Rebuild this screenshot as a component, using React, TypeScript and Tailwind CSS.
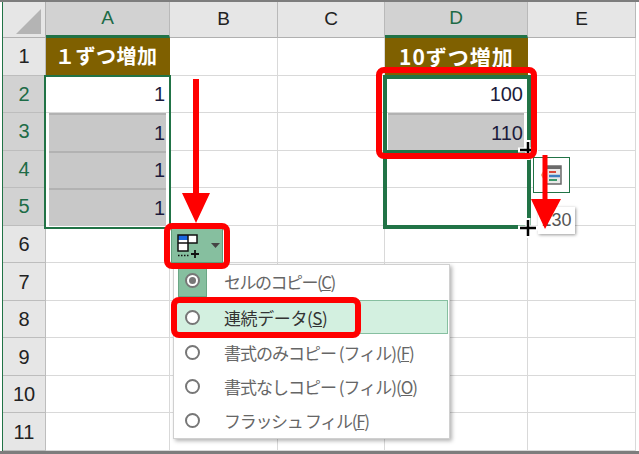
const COLS = ["A", "B", "C", "D", "E"];
const ROWS = [1, 2, 3, 4, 5, 6, 7, 8, 9, 10, 11];
const FONT = "font-['Liberation_Sans','Noto_Sans_CJK_JP',sans-serif]";
const JP = "font-['Noto_Sans_CJK_JP',sans-serif]";

const MENU = [
  { label: "セルのコピー(", key: "C", checked: true, hot: false, track: "tracking-[-1.5px]" },
  { label: "連続データ(", key: "S", checked: false, hot: true, track: "tracking-[-0.4px]" },
  { label: "書式のみコピー (フィル)(", key: "F", checked: false, hot: false, track: "tracking-[-1px]" },
  { label: "書式なしコピー (フィル)(", key: "O", checked: false, hot: false, track: "tracking-[-1px]" },
  { label: "フラッシュ フィル(", key: "F", checked: false, hot: false, track: "tracking-[-1.3px]" },
];

const cellText: Record<string, string> = {
  A2: "1",
  A3: "1",
  A4: "1",
  A5: "1",
  D2: "100",
  D3: "110",
};

const GREY = ["A3", "A4", "A5", "D3"];

function Cell({ id }: { id: string }) {
  const grey = GREY.includes(id);
  if (id === "A1") {
    return (
      <div className="flex items-center border-r border-b border-[#7f6000] bg-[#7f6000]">
        <span className={`${JP} pl-[9px] text-[20px] font-bold tracking-[0.5px] text-white`}>１ずつ増加</span>
      </div>
    );
  }
  if (id === "D1") {
    return (
      <div className="flex items-center border-r border-b border-[#7f6000] bg-[#7f6000]">
        <span className={`${JP} pl-[14px] text-[21px] font-bold tracking-[1px] text-white`}>10ずつ増加</span>
      </div>
    );
  }
  return (
    <div className={`border-r border-[#d9d9d9] bg-white ${grey ? "border-b-0" : "border-b"}`}>
      <div
        className={`flex h-full items-center justify-end text-[20px] text-[#1c1c3c] ${
          grey ? "mx-[3px] border-t-[2px] border-[#b2b2b2] bg-[#c8c8c8] pr-[1px]" : "pr-[4px]"
        }`}
      >
        {cellText[id]}
      </div>
    </div>
  );
}

function Plus({ x, y }: { x: number; y: number }) {
  return (
    <svg className="absolute" style={{ left: x - 10, top: y - 10 }} width="20" height="20" viewBox="0 0 20 20">
      <path d="M0 10h20M10 0v20" stroke="#fff" strokeWidth="5" />
      <path d="M2 10h16M10 2v16" stroke="#000" strokeWidth="2.5" />
    </svg>
  );
}

export default function App() {
  return (
    <div className={`${FONT} relative h-[454px] w-[639px] overflow-hidden border-t-[2px] border-b-[3px] border-[#7d7d7d] bg-white`}>
      <div className="ml-[2px] grid h-full w-[635px] grid-cols-[43px_124px_108px_107px_143px_108px] grid-rows-[36px_repeat(11,37.55px)] border-l border-l-[#217346]">
        {/* corner */}
        <div className="relative border-r border-b border-[#b0b0b0] bg-[#e6e6e6]">
          <svg className="absolute top-[6px] left-[13px]" width="26" height="26" viewBox="0 0 26 26">
            <path d="M0 26 25 1v25z" fill="#b4b4b4" />
          </svg>
        </div>
        {COLS.map((c) => (
          <div
            key={c}
            className={`flex items-center justify-center border-r border-[#b9b9b9] text-[19px] ${
              c === "A" || c === "D"
                ? "border-b-[3px] border-b-[#217346] bg-[#d2d2d2] text-[#1d6b46]"
                : "border-b border-b-[#b0b0b0] bg-[#e6e6e6] text-[#222]"
            }`}
          >
            {c}
          </div>
        ))}
        {ROWS.map((r) => (
          <div key={r} className="contents">
            <div
              className={`flex items-center justify-center border-r border-b border-[#bdbdbd] text-[20px] ${
                r >= 2 && r <= 5 ? "bg-[#d2d2d2] text-[#1d6b46]" : "bg-[#e6e6e6] text-[#222]"
              }`}
            >
              {r}
            </div>
            {COLS.map((c) => (
              <Cell key={c} id={`${c}${r}`} />
            ))}
          </div>
        ))}
      </div>

      {/* selection A2:A5 */}
      <div className="absolute top-[73px] left-[44px] h-[154px] w-[127px] border-[2px] border-[#217346]" />

      {/* selection D2:D5 */}
      <div className="absolute top-[73px] left-[383px] h-[154px] w-[148px] border-[4px] border-[#217346]">
        <div className="absolute top-[71px] right-0 left-0 h-[3px] bg-[#217346]" />
      </div>

      {/* autofill options tag */}
      <div className="absolute top-[155px] left-[533px] flex h-[36px] w-[37px] items-center justify-center border border-[#217346] bg-white">
        <svg width="24" height="24" viewBox="0 0 24 24">
          <path d="M6 3h15v18H6z" fill="#e8e8e8" stroke="#6a6a6a" strokeWidth="1.5" />
          <path d="M6 3h15v3H6z" fill="#6a6a6a" />
          <path d="M9 9h7" stroke="#d84a3a" strokeWidth="2" />
          <path d="M9 13h11" stroke="#3f7fbf" strokeWidth="2.5" />
          <path d="M9 17h8" stroke="#3b9a6b" strokeWidth="2" />
          <path d="M5 7 2 12l3 5" fill="none" stroke="#f3a07a" strokeWidth="2" />
        </svg>
      </div>

      {/* value tooltip */}
      <div className="absolute top-[205px] left-[538px] flex h-[27px] w-[37px] items-center justify-center bg-white text-[18px] text-[#555] shadow-[1px_1px_3px_rgba(0,0,0,0.4)]">
        130
      </div>

      <Plus x={528} y={148} />
      <Plus x={528} y={226} />

      {/* fill options button */}
      <div className="absolute top-[226px] left-[171px] flex h-[35px] w-[52px] items-center border border-[#5f9f7c] bg-[#86bf9f] pl-[5px]">
        <svg width="24" height="24" viewBox="0 0 24 24">
          <path d="M1 1h10v8H1z" fill="#1a66e0" />
          <path d="M1 6h10v4H1zM1 10h10v7H1zM11 1h9v8h-9z" fill="#fff" />
          <path d="M1 1h10v16H1zM11 1h9v8h-9zM1 9h10" fill="none" stroke="#111" strokeWidth="1.5" />
          <path d="M1 21.500h12" stroke="#111" strokeWidth="1.5" strokeDasharray="1.5 1.5" />
          <path d="M14 20h8M18 16v8" stroke="#111" strokeWidth="1.8" />
        </svg>
        <svg className="ml-[10px]" width="9" height="5" viewBox="0 0 9 5">
          <path d="M0 0h9L4.500 5z" fill="#444" />
        </svg>
      </div>

      {/* fill options menu */}
      <div className="absolute top-[262px] left-[173px] flex h-[175px] w-[277px] flex-col border border-[#d0d0d0] bg-white pr-[1px] pl-[2px] shadow-[2px_2px_4px_rgba(0,0,0,0.3)]">
        {MENU.map((m) => (
          <div
            key={m.key + m.label}
            className={`flex flex-1 items-center ${m.hot ? "my-[1px] border border-[#86bfa0] bg-[#d3f0e0]" : "border border-transparent"}`}
          >
            <div
              className={`ml-[1px] flex h-full w-[29px] items-center justify-center ${m.checked ? "mb-[3px] border border-[#6aa785] bg-[#86bf9f]" : ""}`}
            >
              <span className="flex h-[15px] w-[15px] items-center justify-center rounded-full border-[2px] border-[#777] bg-white">
                {m.checked && <span className="h-[7px] w-[7px] rounded-full bg-[#777]" />}
              </span>
            </div>
            <span className={`${JP} ml-[17px] text-[17px] whitespace-pre ${m.track} ${m.hot ? "text-[#333]" : "text-[#666]"}`}>
              {m.label}
              <span className="underline">{m.key}</span>)
            </span>
          </div>
        ))}
      </div>

      {/* red annotations */}
      <div className="absolute top-[65px] left-[376px] h-[92px] w-[161px] rounded-[8px] border-[6px] border-[#ff0000]" />
      <div className="absolute top-[221px] left-[164px] h-[46px] w-[66px] rounded-[8px] border-[6px] border-[#ff0000]" />
      <div className="absolute top-[295px] left-[171px] h-[41px] w-[190px] rounded-[8px] border-[6px] border-[#ff0000]" />

      <svg className="absolute top-[77px] left-[180px]" width="32" height="144" viewBox="0 0 32 144">
        <path d="M13 0h6v114h11L16 144 2 114h11z" fill="#ff0000" />
      </svg>
      <svg className="absolute top-[153px] left-[530px]" width="32" height="74" viewBox="0 0 32 74">
        <path d="M12.500 0h5v44H31L15 74 1 44h11.500z" fill="#ff0000" />
      </svg>
    </div>
  );
}
